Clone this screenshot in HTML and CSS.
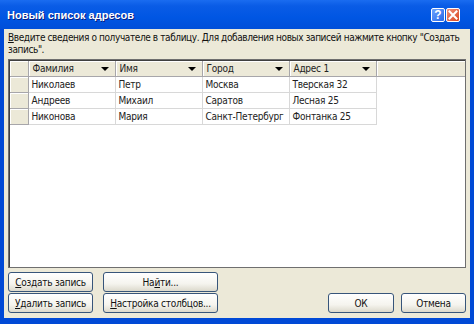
FILE: index.html
```html
<!DOCTYPE html>
<html lang="ru">
<head>
    <meta charset="UTF-8">
    <title>Новый список адресов</title>
    <link rel="stylesheet" href="styles.css">
</head>
<body>

    <div class="window">

        <div class="titlebar">
            <span class="title">Новый список адресов</span>
            <div class="title-buttons">
                <span class="tb-btn tb-help">?</span>
                <span class="tb-btn tb-close">
                    <svg width="10" height="10" viewBox="0 0 10 10">
                        <path d="M1.5 1.5 L8.5 8.5 M8.5 1.5 L1.5 8.5" stroke="#fff" stroke-width="2" stroke-linecap="square"/>
                    </svg>
                </span>
            </div>
        </div>

        <div class="content">
            <p class="hint"><u>В</u>ведите сведения о получателе в таблицу. Для добавления новых записей нажмите кнопку "Создать<br>запись".</p>

            <div class="grid">
                <table>
                    <thead>
                        <tr>
                            <th class="corner"></th>
                            <th><span>Фамилия</span><i class="arrow"></i></th>
                            <th><span>Имя</span><i class="arrow"></i></th>
                            <th><span>Город</span><i class="arrow"></i></th>
                            <th><span>Адрес 1</span><i class="arrow"></i></th>
                            <th class="filler"></th>
                        </tr>
                    </thead>
                    <tbody>
                        <tr>
                            <td class="rowhead"></td>
                            <td>Николаев</td>
                            <td>Петр</td>
                            <td>Москва</td>
                            <td>Тверская 32</td>
                            <td class="empty"></td>
                        </tr>
                        <tr>
                            <td class="rowhead"></td>
                            <td>Андреев</td>
                            <td>Михаил</td>
                            <td>Саратов</td>
                            <td>Лесная 25</td>
                            <td class="empty"></td>
                        </tr>
                        <tr>
                            <td class="rowhead"></td>
                            <td>Никонова</td>
                            <td>Мария</td>
                            <td>Санкт-Петербург</td>
                            <td>Фонтанка 25</td>
                            <td class="empty"></td>
                        </tr>
                    </tbody>
                </table>
            </div>

            <div class="actions">
                <button class="btn"><u>С</u>оздать запись</button>
                <button class="btn">На<u>й</u>ти...</button>
                <span></span>
                <span></span>
                <button class="btn"><u>У</u>далить запись</button>
                <button class="btn"><u>Н</u>астройка столбцов...</button>
                <span></span>
                <div class="dialog-buttons">
                    <button class="btn btn-ok">ОК</button>
                    <button class="btn btn-cancel">Отмена</button>
                </div>
            </div>
        </div>

    </div>

</body>
</html>
```

FILE: styles.css
```css
* {
    margin: 0;
    padding: 0;
    box-sizing: border-box;
}

body {
    width: 474px;
    height: 324px;
    overflow: hidden;
    font-family: "DejaVu Sans Condensed", "Liberation Sans", sans-serif;
    font-size: 10px;
    letter-spacing: -0.25px;
    color: #000000;
}

.window {
    width: 474px;
    height: 324px;
    display: flex;
    flex-direction: column;
    background-color: #0049d6;
    padding: 0 4px 6px 4px;
}

/* title bar */

.titlebar {
    height: 30px;
    margin: 0 -4px;
    padding: 0 14px 0 7px;
    display: flex;
    align-items: center;
    justify-content: space-between;
    background: linear-gradient(#1a6cf0 0%, #0a5ce6 20%, #0056e3 60%, #004fd9 100%);
}

.title {
    font-family: "Liberation Sans", sans-serif;
    font-weight: bold;
    font-size: 11px;
    letter-spacing: 0;
    color: #ffffff;
    text-shadow: 1px 1px #0a1f80;
    padding-top: 1px;
}

.title-buttons {
    display: flex;
    gap: 1px;
}

.tb-btn {
    width: 14px;
    height: 14px;
    border: 1px solid #ffffff;
    border-radius: 2px;
    display: flex;
    align-items: center;
    justify-content: center;
    color: #ffffff;
}

.tb-help {
    background: linear-gradient(135deg, #6ea3ff, #2767e8);
    font-family: "Liberation Sans", sans-serif;
    font-weight: bold;
    font-size: 12px;
    letter-spacing: 0;
}

.tb-close {
    background: linear-gradient(135deg, #f0907a, #d9461f);
}

/* dialog content */

.content {
    flex: 1;
    display: flex;
    flex-direction: column;
    background-color: #ece9d8;
    padding: 0 4px 5px 4px;
}

.hint {
    line-height: 12px;
    margin-top: 3px;
    letter-spacing: -0.4px;
    white-space: nowrap;
    color: #111111;
}

.grid {
    margin-top: 3px;
    height: 209px;
    background-color: #ffffff;
    border: 1px solid #6f6f6f;
    box-shadow: inset 1px 1px #404040;
    padding: 1px 0 0 1px;
    overflow: hidden;
}

table {
    width: 100%;
    border-collapse: collapse;
    table-layout: fixed;
}

th {
    height: 15px;
    background-color: #ece9d8;
    border-right: 1px solid #a7a6aa;
    border-bottom: 1px solid #a7a6aa;
    box-shadow: inset 1px 1px #ffffff;
    font-weight: normal;
    text-align: left;
    padding: 0 5px 0 4px;
    width: 87px;
    position: relative;
}

th span {
    color: #222222;
}

th.corner {
    width: 18px;
}

th.filler {
    width: auto;
    border-right: none;
}

.arrow {
    position: absolute;
    right: 6px;
    top: 6px;
    width: 0;
    height: 0;
    border-left: 4px solid transparent;
    border-right: 4px solid transparent;
    border-top: 4px solid #000000;
}

td {
    height: 16px;
    padding: 0 3px;
    border-right: 1px solid #d8d8d8;
    border-bottom: 1px solid #d8d8d8;
    color: #222222;
    white-space: nowrap;
    overflow: hidden;
}

td.rowhead {
    background-color: #ece9d8;
    border-right: 1px solid #a7a6aa;
    border-bottom: 1px solid #a7a6aa;
    box-shadow: inset 1px 1px #ffffff;
}

td.empty {
    border: none;
}

/* buttons */

.actions {
    margin-top: 4px;
    display: grid;
    grid-template-columns: 85px 115px 1fr auto;
    column-gap: 10px;
    row-gap: 1px;
}

.dialog-buttons {
    display: flex;
    gap: 7px;
}

.btn {
    height: 20px;
    font-family: inherit;
    font-size: 10px;
    letter-spacing: -0.25px;
    white-space: nowrap;
    color: #111111;
    background: linear-gradient(#ffffff 0%, #f5f4ee 60%, #dcd9cc 100%);
    border: 1px solid #37557a;
    border-radius: 3px;
    padding: 0 2px;
    text-align: center;
}

.btn-ok {
    width: 66px;
}

.btn-cancel {
    width: 65px;
}
```
